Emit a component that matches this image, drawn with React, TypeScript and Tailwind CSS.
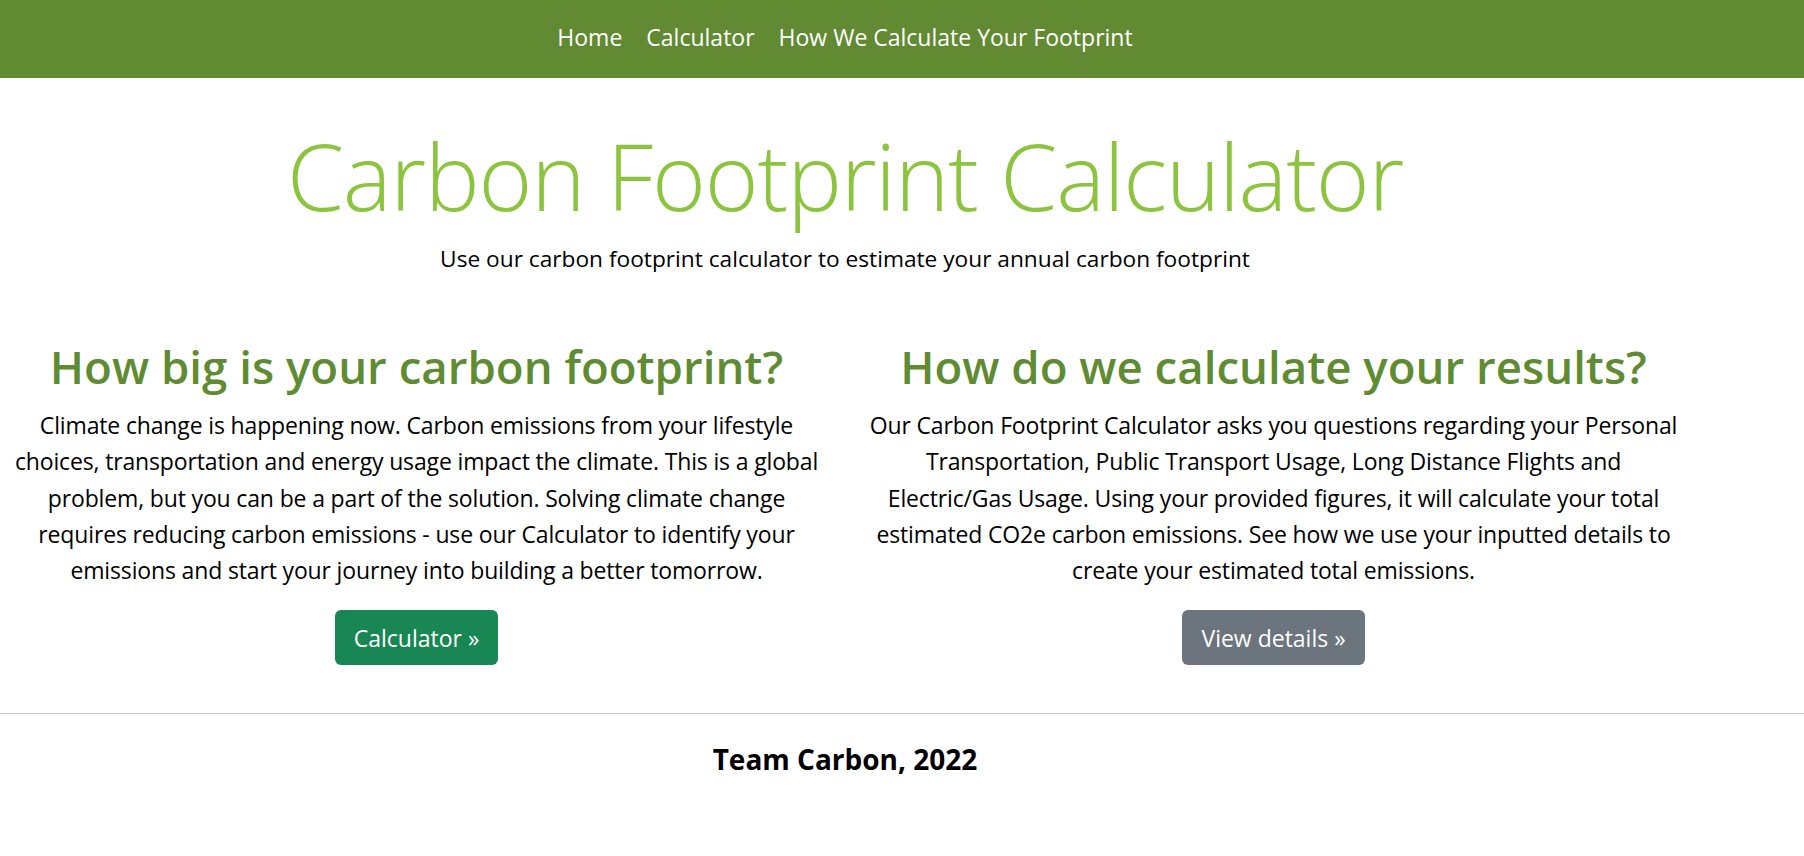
export default function App() {
  return (
    <div className="min-h-screen bg-white font-['Open_Sans',sans-serif] text-black overflow-hidden">
      <nav className="bg-[#618a32] h-[78px]">
        <div className="w-[1690px] h-full flex items-center justify-center gap-[24px] text-[23px] text-white pb-[3px]">
          <a href="#">Home</a>
          <a href="#">Calculator</a>
          <a href="#">How We Calculate Your Footprint</a>
        </div>
      </nav>

      <main className="w-[1690px]">
        <header className="text-center">
          <h1 className="mt-[43px] text-[92px] leading-[110px] tracking-[-1.2px] font-light text-[#8cc43f]">
            Carbon Footprint Calculator
          </h1>
          <p className="mt-[11px] text-[22.7px] leading-[33px]">
            Use our carbon footprint calculator to estimate your annual carbon footprint
          </p>
        </header>

        <div className="grid grid-cols-2 mx-[-12px] mt-[64px] text-center">
          <section className="px-[12px] flex flex-col items-center">
            <h2 className="text-[45.6px] leading-[55px] font-semibold text-[#5f8c33]">
              How big is your carbon footprint?
            </h2>
            <p className="mt-[13px] max-w-[815px] text-[23px] leading-[36.25px] tracking-[-0.15px]">
              Climate change is happening now. Carbon emissions from your lifestyle choices,
              transportation and energy usage impact the climate. This is a global problem, but
              you can be a part of the solution. Solving climate change requires reducing carbon
              emissions - use our Calculator to identify your emissions and start your journey
              into building a better tomorrow.
            </p>
            <a
              href="#"
              className="mt-[22px] h-[55px] px-[19px] flex items-center rounded-[6px] bg-[#198754] text-white text-[23px]"
            >
              Calculator »
            </a>
          </section>

          <section className="px-[12px] flex flex-col items-center">
            <h2 className="text-[45.6px] leading-[55px] font-semibold text-[#5f8c33]">
              How do we calculate your results?
            </h2>
            <p className="mt-[13px] max-w-[815px] text-[23px] leading-[36.25px] tracking-[-0.15px]">
              Our Carbon Footprint Calculator asks you questions regarding your Personal
              Transportation, Public Transport Usage, Long Distance Flights and Electric/Gas
              Usage. Using your provided figures, it will calculate your total estimated CO2e
              carbon emissions. See how we use your inputted details to create your estimated
              total emissions.
            </p>
            <a
              href="#"
              className="mt-[22px] h-[55px] px-[19px] flex items-center rounded-[6px] bg-[#6c757d] text-white text-[23px]"
            >
              View details »
            </a>
          </section>
        </div>
      </main>

      <hr className="mt-[48px] border-0 border-t border-[#c6c6c6]" />

      <footer className="w-[1690px] text-center pt-[29px] pb-[60px]">
        <p className="text-[28px] leading-[33.6px] font-bold">Team Carbon, 2022</p>
      </footer>
    </div>
  );
}
